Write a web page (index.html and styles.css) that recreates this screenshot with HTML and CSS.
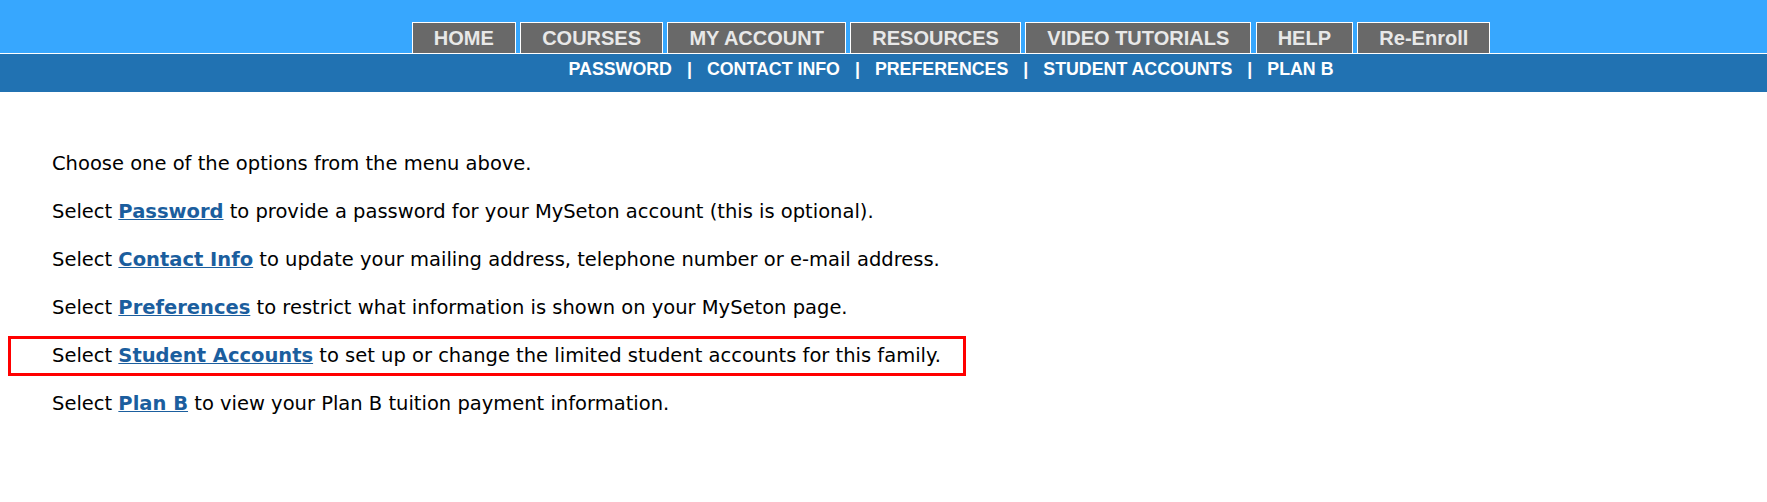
FILE: index.html
```html
<!DOCTYPE html>
<html lang="en">
<head>
    <meta charset="UTF-8">
    <meta name="viewport" content="width=device-width, initial-scale=1.0">
    <title>MySeton - My Account</title>
    <link rel="stylesheet" href="styles.css">
</head>
<body>
    <div class="topbar">
        <nav class="tabs">
            <a class="tab" href="#">HOME</a>
            <a class="tab" href="#">COURSES</a>
            <a class="tab" href="#">MY ACCOUNT</a>
            <a class="tab" href="#">RESOURCES</a>
            <a class="tab" href="#">VIDEO TUTORIALS</a>
            <a class="tab" href="#">HELP</a>
            <a class="tab" href="#">Re-Enroll</a>
        </nav>
    </div>
    <div class="subbar">
        <nav class="subnav">
            <a href="#">PASSWORD</a><span class="sep">|</span><a href="#">CONTACT INFO</a><span class="sep">|</span><a href="#">PREFERENCES</a><span class="sep">|</span><a href="#">STUDENT ACCOUNTS</a><span class="sep">|</span><a href="#">PLAN B</a>
        </nav>
    </div>
    <div id="content">
        <p>Choose one of the options from the menu above.</p>
        <p>Select <a href="#">Password</a> to provide a password for your MySeton account (this is optional).</p>
        <p>Select <a href="#">Contact Info</a> to update your mailing address, telephone number or e-mail address.</p>
        <p>Select <a href="#">Preferences</a> to restrict what information is shown on your MySeton page.</p>
        <p class="highlight">Select <a href="#">Student Accounts</a> to set up or change the limited student accounts for this family.</p>
        <p>Select <a href="#">Plan B</a> to view your Plan B tuition payment information.</p>
    </div>
</body>
</html>
```

FILE: styles.css
```css
body {
    margin: 0;
    padding: 0;
    background-color: #ffffff;
    font-family: "DejaVu Sans", Verdana, sans-serif;
    color: #000000;
}
.topbar {
    background-color: #37a7fe;
    height: 53px;
    border-bottom: 1px solid #ffffff;
}
.tabs {
    display: flex;
    justify-content: center;
    align-items: flex-end;
    gap: 4.4px;
    height: 100%;
    padding-left: 135px;
}
.tab {
    display: block;
    height: 30px;
    line-height: 30px;
    padding: 0 21px;
    background-color: #696969;
    border: 1px solid #ffffff;
    border-bottom: none;
    color: #e8e8e8;
    font-family: "Liberation Sans", Arial, sans-serif;
    font-weight: bold;
    font-size: 20px;
    text-decoration: none;
}
.subbar {
    background-color: #2172b2;
    height: 38px;
    box-sizing: border-box;
    padding-top: 5px;
}
.subnav {
    display: flex;
    justify-content: center;
    padding-left: 135px;
    font-family: "Liberation Sans", Arial, sans-serif;
    font-weight: bold;
    font-size: 17.8px;
    line-height: 20px;
    color: #ffffff;
}
.subnav a {
    color: #ffffff;
    text-decoration: none;
}
.subnav .sep {
    margin: 0 15px;
}
#content {
    padding: 60px 0 0 52px;
    font-size: 19.5px;
    line-height: 23px;
}
#content p {
    margin: 0 0 25px 0;
}
#content a {
    color: #1b5e9e;
    font-weight: bold;
    text-decoration: underline;
}
#content p.highlight {
    width: fit-content;
    margin: -8px 0 16px -44px;
    padding: 5px 22px 6px 41px;
    border: 3px solid #ff0000;
}
```
